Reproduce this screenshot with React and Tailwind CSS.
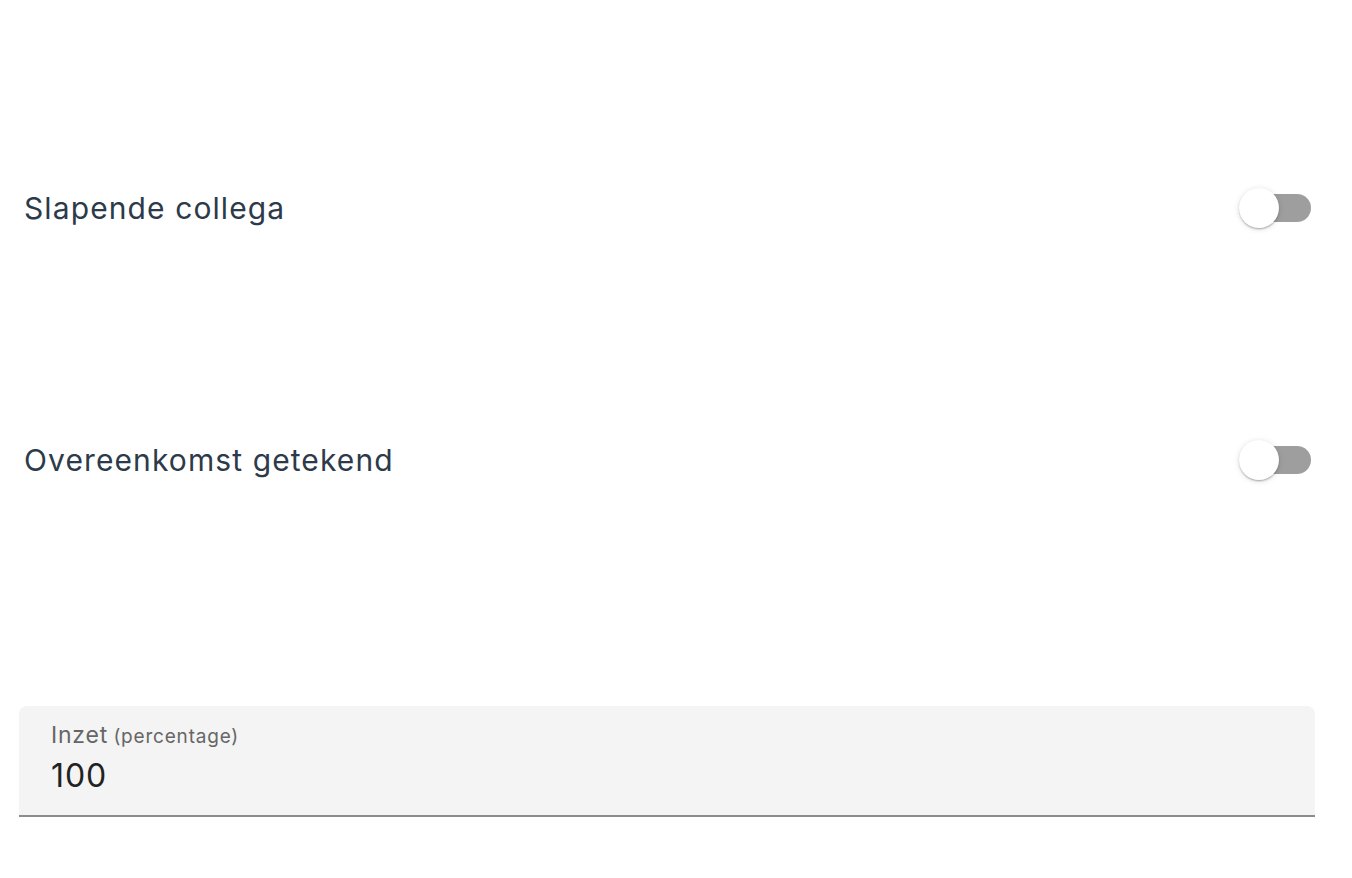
import React from 'react'

const Toggle = () => (
  <div className="relative w-[72px] h-[40px] flex items-center">
    <div className="absolute left-[6px] right-0 h-[28px] rounded-full bg-[#9e9e9e]" />
    <div className="absolute left-0 top-0 w-[40px] h-[40px] rounded-full bg-white shadow-[0_2px_2px_-1px_rgba(0,0,0,0.2),0_1px_2px_0_rgba(0,0,0,0.14),0_1px_6px_0_rgba(0,0,0,0.12)]" />
  </div>
)

const Row = ({ label }) => (
  <div className="h-[252px] flex items-center justify-between pl-[5px] pr-[4px]">
    <span className="text-[30px] text-[#2d3a4a] tracking-[1.1px]">{label}</span>
    <Toggle />
  </div>
)

export default function App() {
  return (
    <div className="min-h-[878px] bg-white font-['Inter',sans-serif]">
      <div className="w-[1296px] ml-[19px] pt-[82px]">
        <Row label="Slapende collega" />
        <Row label="Overeenkomst getekend" />
        <div className="mt-[120px] h-[111px] bg-[#f4f4f4] rounded-t-[8px] border-b-2 border-[#8c8c8c] pl-[32px] pt-[15px]">
          <div className="text-[#666666] leading-[28px] tracking-[0.8px]">
            <span className="text-[23px]">Inzet</span>{' '}
            <span className="text-[19px]">(percentage)</span>
          </div>
          <div className="text-[32px] text-[#222222] leading-[44px] mt-[3px] tracking-[0.9px]">100</div>
        </div>
      </div>
    </div>
  )
}
